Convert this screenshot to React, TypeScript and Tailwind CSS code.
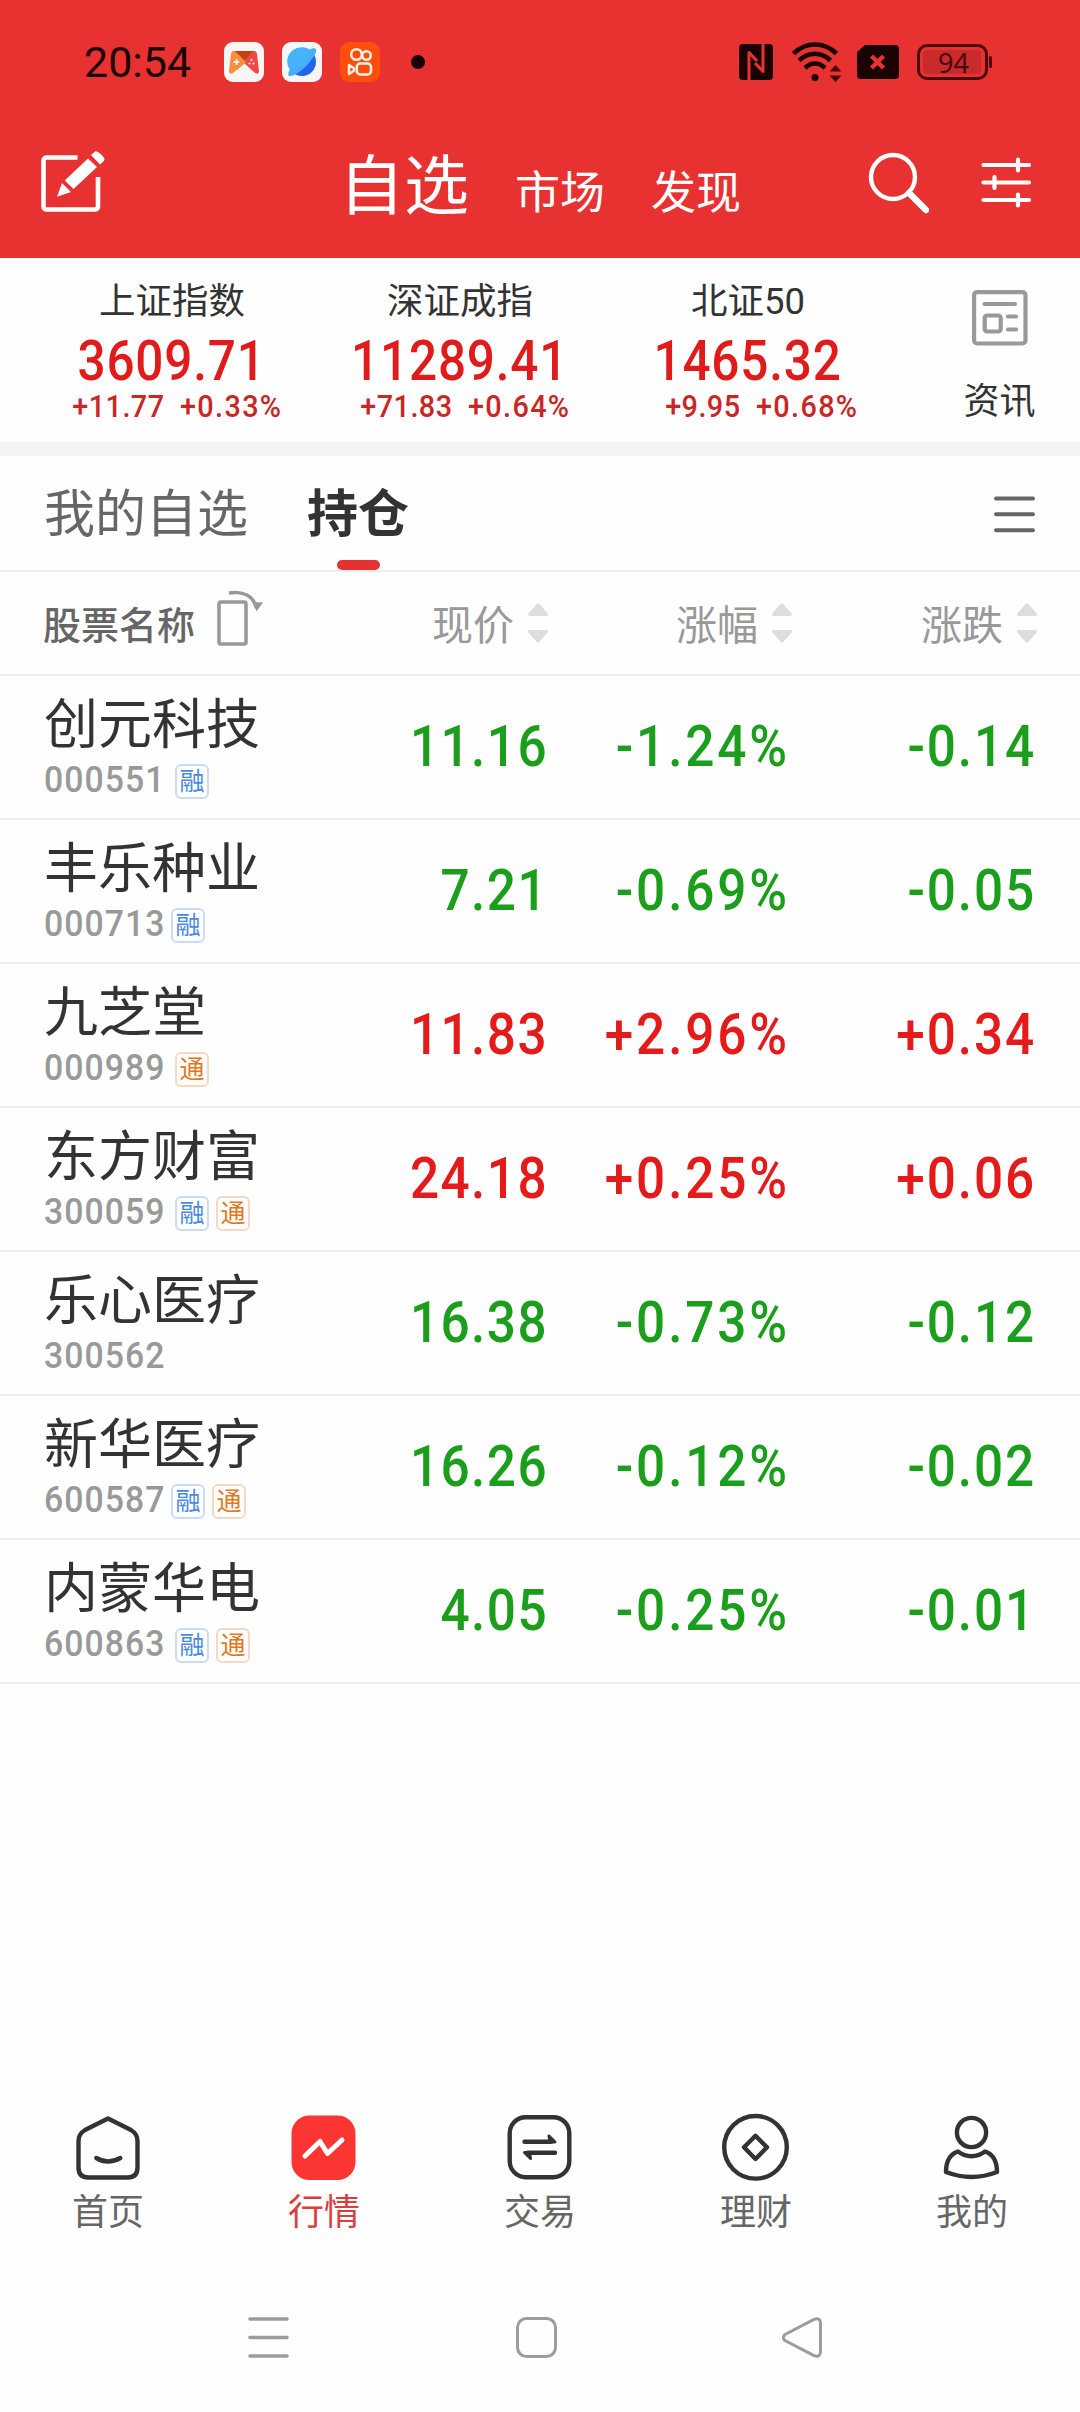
import React from 'react';

type Tag = '融' | '通';

interface Stock {
    name: string;
    code: string;
    tags: Tag[];
    price: string;
    percent: string;
    change: string;
}

const indices = [
    { name: '上证指数', value: '3609.71', change: '+11.77', percent: '+0.33%' },
    { name: '深证成指', value: '11289.41', change: '+71.83', percent: '+0.64%' },
    { name: '北证50', value: '1465.32', change: '+9.95', percent: '+0.68%' },
];

const stocks: Stock[] = [
    { name: '创元科技', code: '000551', tags: ['融'], price: '11.16', percent: '-1.24%', change: '-0.14' },
    { name: '丰乐种业', code: '000713', tags: ['融'], price: '7.21', percent: '-0.69%', change: '-0.05' },
    { name: '九芝堂', code: '000989', tags: ['通'], price: '11.83', percent: '+2.96%', change: '+0.34' },
    { name: '东方财富', code: '300059', tags: ['融', '通'], price: '24.18', percent: '+0.25%', change: '+0.06' },
    { name: '乐心医疗', code: '300562', tags: [], price: '16.38', percent: '-0.73%', change: '-0.12' },
    { name: '新华医疗', code: '600587', tags: ['融', '通'], price: '16.26', percent: '-0.12%', change: '-0.02' },
    { name: '内蒙华电', code: '600863', tags: ['融', '通'], price: '4.05', percent: '-0.25%', change: '-0.01' },
];

const StatusBar = () => (
    <div className="flex h-[124px] items-center pl-[84px] pr-[88px] text-[#1a0204]">
        <span className="w-[140px] text-[43px] leading-none">20:54</span>
        <div className="flex items-center gap-[18px]">
            <svg width="40" height="40" viewBox="0 0 40 40">
                <rect width="40" height="40" rx="9" fill="#f8f6f5" />
                <path d="M10 9h21l-10 12z" fill="#c2410c" />
                <path d="M10 9c-2 0-2.6 1-3 3L5 29c0 3 2 3 4 2l13-11L12 10z" fill="#f98f3d" />
                <path d="M30 9c2 0 2.6 1 3 3l2 17c0 3-2 3-4 2L19 20 28 10z" fill="#ee4a45" />
                <path d="M10 9l12 11-9 8z" fill="#f98f3d" />
                <path d="M12.500 17v6M9.500 20h6" stroke="#fff" strokeWidth="1.600" />
                <circle cx="27.500" cy="18" r="1" fill="#fff" />
                <circle cx="25.500" cy="21.500" r="1" fill="#fff" />
                <circle cx="29.500" cy="21.500" r="1" fill="#fff" />
            </svg>
            <svg width="40" height="40" viewBox="0 0 40 40">
                <rect width="40" height="40" rx="9" fill="#f5f6f8" />
                <circle cx="20" cy="20" r="14" fill="#2563eb" />
                <path d="M31 11A14 14 0 1 0 8 28C18 28 27 20 31 11z" fill="#47b2fd" />
                <path d="M27 8c5-3 8-2 7 2-3 8-14 20-22 23-5 2-7 1-5-4l2-2c9 0 19-9 21-16z" fill="#45aef9" />
            </svg>
            <svg width="40" height="40" viewBox="0 0 40 40" fill="none" stroke="#fff3e8" strokeWidth="2.500">
                <rect width="40" height="40" rx="9" fill="#ff4d0b" stroke="none" />
                <circle cx="16.500" cy="12.500" r="5.300" />
                <circle cx="26.500" cy="13.500" r="4.300" />
                <rect x="16.800" y="21.500" width="14.200" height="11" rx="3.500" />
                <path d="M9 23v9l5-3.200v-2.600z" strokeLinejoin="round" />
            </svg>
        </div>
        <span className="ml-[31px] size-[14px] rounded-full bg-[#1a0204]" />

        <div className="ml-auto flex items-center">
            <svg width="34" height="36" viewBox="0 0 34 36">
                <rect width="34" height="36" rx="4" fill="#1a0204" />
                <path d="M10 36V8.500l8 8.500M24 0v27.500l-8-8.500" fill="none" stroke="#e83131" strokeWidth="3" strokeLinejoin="round" />
            </svg>
            <svg className="ml-[19px]" width="50" height="40" viewBox="0 0 50 40" fill="none" stroke="#1a0204" strokeWidth="4.600">
                <path d="M1.500 11.500C14-.5 32-.5 44.500 11.500" />
                <path d="M7 18.500C17 9.500 29 9.500 38.500 18.500" />
                <path d="M13 26C19 20 27 20 33 26" />
                <circle cx="23" cy="35.500" r="3.500" fill="#1a0204" stroke="none" />
                <path d="M37.500 29.500l6-6.500 6 6.500zM37.500 33.500l6 6.500 6-6.500z" fill="#4a090d" stroke="none" />
            </svg>
            <svg className="ml-[15px]" width="42" height="34" viewBox="0 0 42 34">
                <path d="M8 0h30a4 4 0 0 1 4 4v26a4 4 0 0 1-4 4H4a4 4 0 0 1-4-4V7z" fill="#1a0204" />
                <path d="M14.500 11l12 12M26.500 11l-12 12" stroke="#e83131" strokeWidth="4.500" />
            </svg>
            <div className="ml-[18px] flex h-[36px] w-[71px] items-center rounded-[10px] border-[3px] border-[#4a090d] p-[3px]">
                <div className="flex h-[24px] w-[58px] items-center justify-center rounded-[4px] bg-[#c92a2b] pl-[3px] font-['Noto_Sans'] text-[27px] leading-none text-[#4a090d]">
                    94
                </div>
            </div>
            <span className="ml-[1px] h-[12px] w-[3px] rounded-full bg-[#4a090d]" />
        </div>
    </div>
);

const EditIcon = () => (
    <svg width="66" height="64" viewBox="0 0 66 64" fill="#fff">
        <path d="M37.500 7.500H6.500a3 3 0 0 0-3 3v46a3 3 0 0 0 3 3h48.500a3 3 0 0 0 3-3V27" fill="none" stroke="#fff" strokeWidth="4.600" />
        <path d="M48 8.500l9 8.500-23.500 22-8.800-8.500zM22 33l9 9-14 4.700zM51 5l4-3.500c2-1.500 9 5 9.500 7.500 0 1.500-1.500 3-4.500 5.500z" />
    </svg>
);

const AppBar = () => (
    <div className="flex h-[134px] items-start px-[40px] pt-[26px] text-white">
        <EditIcon />
        <div className="ml-[233px] flex items-baseline pt-[5px] leading-[64px]">
            <span className="w-[176px] text-[65px]">自选</span>
            <span className="w-[136px] text-[45px]">市场</span>
            <span className="text-[45px]">发现</span>
        </div>
        <svg className="ml-auto mt-[1px]" width="62" height="64" viewBox="0 0 62 64" fill="none" stroke="#fff" strokeLinecap="round">
            <circle cx="26" cy="26" r="22" strokeWidth="4.400" />
            <path d="M42 42l17 17" strokeWidth="6.500" />
        </svg>
        <svg className="ml-[52px] mr-[8px] mt-[6px]" width="51" height="54" viewBox="0 0 51 54" stroke="#fff" strokeWidth="4.200" strokeLinecap="round">
            <path d="M2.500 9H48M2.500 26.500H48M2.500 44H48M37 3.500v11M13.500 21v11M37 38.500v11" />
        </svg>
    </div>
);

const NewsEntry = () => (
    <div className="flex flex-1 flex-col items-center pl-[27px] pt-[32px]">
        <svg width="56" height="56" viewBox="0 0 56 56" fill="none" stroke="#999" strokeWidth="4.200" strokeLinecap="round">
            <rect x="2.100" y="2.100" width="51.400" height="51.400" rx="3" />
            <path d="M12.500 14H43M36 26.500h8M36 39.500h8" />
            <rect x="12.700" y="25.500" width="16" height="16" rx="2.500" />
        </svg>
        <span className="mt-[38px] text-[36px] leading-[36px] text-[#333]">资讯</span>
    </div>
);

const IndexStrip = () => (
    <div className="flex h-[184px] pl-[28px]">
        {indices.map((item) => (
            <div key={item.name} className="flex w-[288px] flex-col items-center">
                <span className="mt-[26px] text-[36.500px] leading-[36px] text-[#333]">{item.name}</span>
                <span className="mt-[13px] scale-x-90 text-[55px] font-medium leading-[56px] tracking-[0.900px] text-[#e01b1b]">
                    {item.value}
                </span>
                <div className="grid w-full grid-cols-2 gap-[15px] text-[32px] font-medium leading-[34px] text-[#c92626]">
                    <span className="origin-right scale-x-90 text-right tracking-[0.500px]">{item.change}</span>
                    <span className="origin-left scale-x-90 tracking-[1.500px]">{item.percent}</span>
                </div>
            </div>
        ))}
        <NewsEntry />
    </div>
);

const GroupTabs = () => (
    <div className="flex h-[116px] items-stretch border-b-2 border-[#eee] pl-[44px] pr-[44px]">
        <span className="w-[263px] pt-[29px] text-[51px] leading-[60px] text-[#666]">我的自选</span>
        <div className="flex flex-col items-center justify-between pt-[29px]">
            <span className="text-[51px] font-bold leading-[60px] text-[#333]">持仓</span>
            <span className="h-[10px] w-[43px] rounded-full bg-[#e43232]" />
        </div>
        <svg className="ml-auto mt-[38px]" width="43" height="40" viewBox="0 0 43 40" stroke="#666" strokeWidth="4" strokeLinecap="round">
            <path d="M3 4.500h37M3 20.300h37M3 36.200h37" />
        </svg>
    </div>
);

const SortArrows = () => (
    <svg width="20" height="40" viewBox="0 0 20 40" fill="#ddd">
        <path d="M8.500 1.200q1.500-1.400 3 0l8 9q1 2.800-1 2.800h-17q-2 0-1-2.800zM8.500 38.800q1.500 1.400 3 0l8-9q1-2.800-1-2.800h-17q-2 0-1 2.800z" />
    </svg>
);

const HeaderCell = ({ label, className }: { label: string; className: string }) => (
    <div className={`flex items-center justify-end gap-[14px] text-[41px] text-[#999] ${className}`}>
        <span className="pt-[8px]">{label}</span>
        <SortArrows />
    </div>
);

const TableHeader = () => (
    <div className="flex h-[104px] items-center border-b-2 border-[#eee] pl-[43px]">
        <div className="flex w-[262px] items-center text-[38px] font-medium leading-none text-[#666]">
            <span className="pt-[5px]">股票名称</span>
            <svg className="-mt-[10px] ml-[21px]" width="48" height="58" viewBox="0 0 48 58" fill="none" stroke="#999" strokeWidth="3.600">
                <rect x="3" y="13" width="27" height="42" rx="2" />
                <path d="M13 4c13-2 24 2 27.500 15" />
                <path d="M37 13l10 0.500-6.500 9z" fill="#999" stroke="none" />
            </svg>
        </div>
        <HeaderCell label="现价" className="w-[243px]" />
        <HeaderCell label="涨幅" className="w-[244px]" />
        <HeaderCell label="涨跌" className="w-[245px]" />
    </div>
);

const TagBadge = ({ tag }: { tag: Tag }) => (
    <span
        className={`flex h-[35px] w-[34px] items-center justify-center rounded-[6px] border-2 text-[25px] leading-none ${
            tag === '融' ? 'border-[#c9dcf5] text-[#4a8ae0]' : 'border-[#f6d9c0] text-[#dd7a1f]'
        }`}
    >
        {tag}
    </span>
);

const StockRow: React.FC<{ stock: Stock }> = ({ stock }) => {
    const color = stock.change.startsWith('+') ? 'text-[#e51a1a]' : 'text-[#1b9e1b]';
    const codeWidth = stock.code.includes('7') ? 'w-[127px]' : 'w-[131px]';

    return (
        <div className="flex h-[144px] border-b-2 border-[#eee] pl-[44px]">
            <div className="w-[261px] pt-[20px]">
                <div className="text-[54px] leading-[60px] text-[#333]">{stock.name}</div>
                <div className="mt-[8px] flex h-[35px] items-center">
                    <span
                        className={`-mt-[3px] origin-left scale-x-90 text-[37.500px] font-medium leading-none tracking-[1.200px] text-[#999] ${codeWidth}`}
                    >
                        {stock.code}
                    </span>
                    <div className="flex gap-[7px]">
                        {stock.tags.map((tag) => (
                            <TagBadge key={tag} tag={tag} />
                        ))}
                    </div>
                </div>
            </div>
            <div className={`flex items-center text-right text-[57px] font-medium tracking-[1.600px] ${color}`}>
                <span className="w-[243px] origin-right scale-x-90">{stock.price}</span>
                <span className="w-[242px] origin-right scale-x-90 tracking-[3.200px]">{stock.percent}</span>
                <span className="w-[246px] origin-right scale-x-90 tracking-[2.100px]">{stock.change}</span>
            </div>
        </div>
    );
};

const tabs = [
    {
        label: '首页',
        icon: (
            <path d="M35 5.500L58 17q6.500 4 6.500 11v26.500q0 10-10 10h-39q-10 0-10-10V28q0-7 6.500-11zM23.300 45q11.700 7 24 0" />
        ),
    },
    {
        label: '行情',
        active: true,
        icon: (
            <>
                <rect x="2.500" y="2.500" width="64" height="64.500" rx="18" fill="#fb3532" stroke="none" />
                <path d="M16 43l15-14.500 7.500 12L53 27" stroke="#fff" strokeWidth="5" />
            </>
        ),
    },
    {
        label: '交易',
        icon: (
            <>
                <rect x="4.700" y="4.200" width="59.600" height="60" rx="16" />
                <path d="M19.500 28.800H46M50 39.800H23" />
                <path d="M44 23l6 6h-5zM25.500 45.500l-6-6h5z" fill="#333" strokeWidth="3" />
            </>
        ),
    },
    {
        label: '理财',
        icon: (
            <>
                <circle cx="34.500" cy="34.300" r="31.300" />
                <path d="M34.500 22.800L46 34.300 34.500 46 23 34.300z" />
            </>
        ),
    },
    {
        label: '我的',
        icon: (
            <>
                <circle cx="34.500" cy="19.500" r="14.600" />
                <path d="M21 38.500q13.500 9.500 27 0c9 3 12 12 12 20.500q-25.500 10-51 0c0-8.500 3-17.500 12-20.500z" />
            </>
        ),
    },
];

const BottomTabs = () => (
    <div className="flex h-[150px]">
        {tabs.map((tab) => (
            <div key={tab.label} className="flex w-[216px] flex-col items-center">
                <svg width="70" height="70" viewBox="0 0 70 70" fill="none" stroke="#333" strokeWidth="4.400" strokeLinecap="round" strokeLinejoin="round">
                    {tab.icon}
                </svg>
                <span className={`mt-[12px] text-[36px] leading-[36px] ${tab.active ? 'text-[#dc3d3d]' : 'text-[#666]'}`}>
                    {tab.label}
                </span>
            </div>
        ))}
    </div>
);

const SystemNav = () => (
    <div className="mt-[52px] flex pl-[246px]">
        <svg width="45" height="45" viewBox="0 0 45 45" stroke="#9c9c9c" strokeWidth="3.600" strokeLinecap="round">
            <path d="M4 4h37M4 22.500h37M4 41h37" />
        </svg>
        <svg className="ml-[223px]" width="45" height="45" viewBox="0 0 45 45" fill="none" stroke="#9c9c9c" strokeWidth="3">
            <rect x="3.500" y="3.500" width="38" height="38" rx="9" />
        </svg>
        <svg className="ml-[221px]" width="45" height="45" viewBox="0 0 45 45" fill="none" stroke="#9c9c9c" strokeWidth="3">
            <path d="M5 19.500L34 4.300q6-2 6.500 3.500v29.400q-.5 5.500-6.500 3.500L5 25.500q-3.500-3 0-6z" />
        </svg>
    </div>
);

export default function App() {
    return (
        <div className="flex h-[2412px] w-[1080px] flex-col overflow-hidden bg-[#fefefe] font-[Roboto,'Noto_Sans_CJK_SC',sans-serif]">
            <header className="bg-[#e83131]">
                <StatusBar />
                <AppBar />
            </header>
            <IndexStrip />
            <div className="h-[14px] bg-[#f4f4f4]" />
            <GroupTabs />
            <TableHeader />
            <main className="flex-1">
                {stocks.map((stock) => (
                    <StockRow key={stock.code} stock={stock} />
                ))}
            </main>
            <footer className="h-[300px] pt-px">
                <BottomTabs />
                <SystemNav />
            </footer>
        </div>
    );
}
